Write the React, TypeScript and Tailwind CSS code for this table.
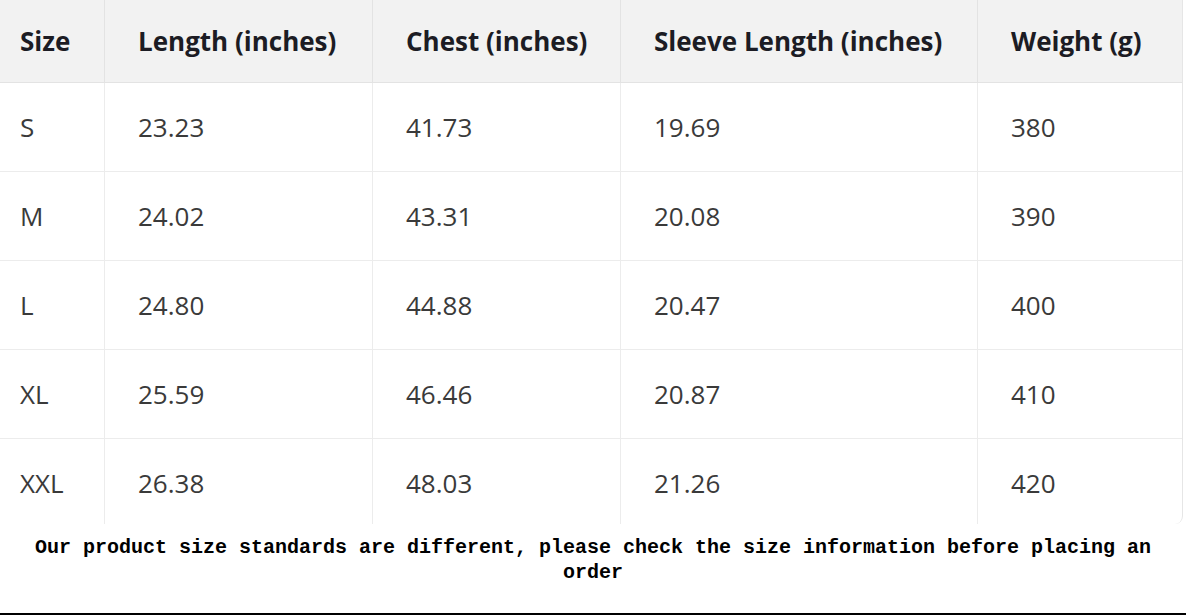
const headers = ['Size', 'Length (inches)', 'Chest (inches)', 'Sleeve Length (inches)', 'Weight (g)'];

const rows = [
  ['S', '23.23', '41.73', '19.69', '380'],
  ['M', '24.02', '43.31', '20.08', '390'],
  ['L', '24.80', '44.88', '20.47', '400'],
  ['XL', '25.59', '46.46', '20.87', '410'],
  ['XXL', '26.38', '48.03', '21.26', '420'],
];

const colWidths = ['w-[104px]', 'w-[268px]', 'w-[248px]', 'w-[357px]', 'w-[205px]'];

export default function App() {
  return (
    <div className="h-[615px] w-[1186px] overflow-hidden bg-white">
      {/* Size table */}
      <div className="h-[524px] w-[1183px] overflow-hidden rounded-br-lg border-r border-[#e6e6e6] font-['Open_Sans',sans-serif]">
        <div className="flex h-[83px] bg-[#f2f2f2] border-b border-[#e3e3e3]">
          {headers.map((h, i) => (
            <div
              key={h}
              className={`${colWidths[i]} flex items-center text-[26px] font-bold text-[#1c1c24] ${i === 0 ? 'pl-[20px]' : 'pl-[33px] border-l border-[#e3e3e3]'}`}
            >
              {h}
            </div>
          ))}
        </div>
        {rows.map((r) => (
          <div key={r[0]} className="flex h-[89px] border-b border-[#ececec]">
            {r.map((c, i) => (
              <div
                key={i}
                className={`${colWidths[i]} flex items-center text-[26px] text-[#3a3a3a] ${i === 0 ? 'pl-[20px]' : 'pl-[33px] border-l border-[#ececec]'}`}
              >
                {c}
              </div>
            ))}
          </div>
        ))}
      </div>

      {/* Note */}
      <div className="h-[91px] border-b-2 border-black">
        <p className="mx-auto w-[1140px] pt-[11px] text-center font-['Liberation_Mono',monospace] text-[20px] font-bold leading-[25px] text-black">
          Our product size standards are different, please check the size information before placing an order
        </p>
      </div>
    </div>
  );
}
